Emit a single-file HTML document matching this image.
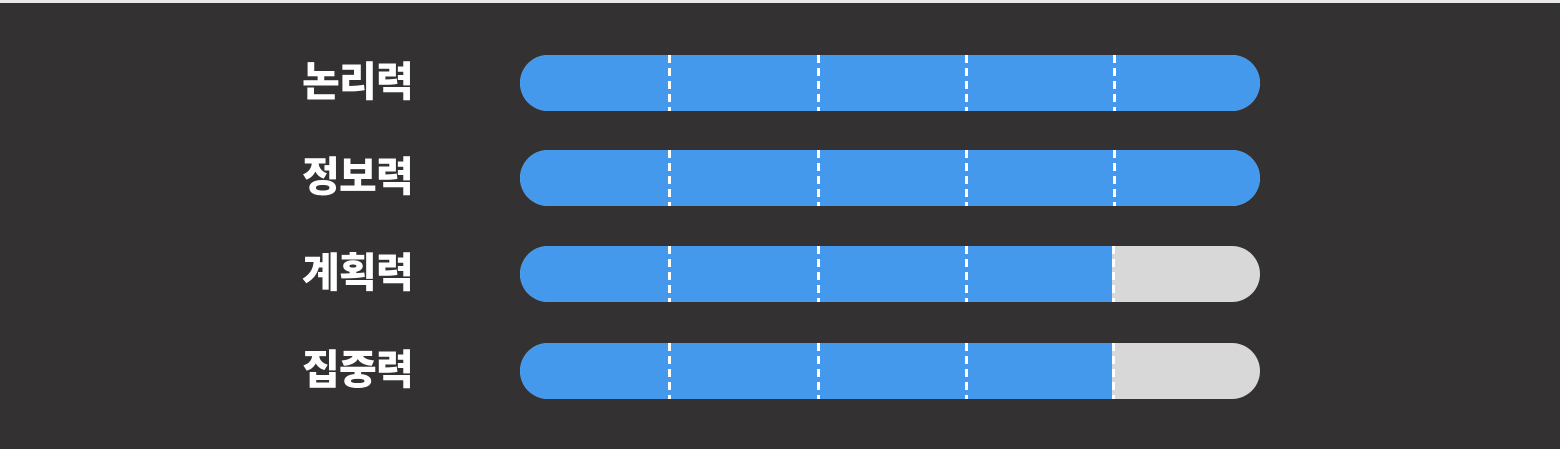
<!DOCTYPE html>
<html><head><meta charset="utf-8"><style>
html,body{margin:0;padding:0}
body{width:1560px;height:449px;background:#333132;position:relative;overflow:hidden;font-family:"Liberation Sans","Noto Sans CJK KR",sans-serif}
.top{position:absolute;left:0;top:0;width:1560px;height:3px;background:#e8e8e8}
.lbl{position:absolute;left:302px;width:130px;color:#fff;font-weight:900;font-size:41px;letter-spacing:-0.7px;line-height:56px;height:56px;white-space:nowrap}
.bar{position:absolute;left:520px;width:740px;height:56px;border-radius:28px;background:#d8d8d8;overflow:hidden}
.fill{position:absolute;left:0;top:0;height:100%;background:#4499ec}
.d{position:absolute;top:0;width:3px;height:100%;background:repeating-linear-gradient(to bottom,#fff 0 8px,transparent 8px 13px)}
</style></head><body>
<div class="top"></div>

<div class="lbl" style="top:54px">논리력</div>
<div class="bar" style="top:55px"><div class="fill" style="width:740px"></div><div class="d" style="left:148px"></div><div class="d" style="left:297px"></div><div class="d" style="left:445px"></div><div class="d" style="left:593px"></div></div>

<div class="lbl" style="top:149px">정보력</div>
<div class="bar" style="top:150px"><div class="fill" style="width:740px"></div><div class="d" style="left:148px"></div><div class="d" style="left:297px"></div><div class="d" style="left:445px"></div><div class="d" style="left:593px"></div></div>

<div class="lbl" style="top:245px">계획력</div>
<div class="bar" style="top:246px"><div class="fill" style="width:592px"></div><div class="d" style="left:148px"></div><div class="d" style="left:297px"></div><div class="d" style="left:445px"></div><div class="d" style="left:592px"></div></div>

<div class="lbl" style="top:342px">집중력</div>
<div class="bar" style="top:343px"><div class="fill" style="width:592px"></div><div class="d" style="left:148px"></div><div class="d" style="left:297px"></div><div class="d" style="left:445px"></div><div class="d" style="left:592px"></div></div>
</body></html>
